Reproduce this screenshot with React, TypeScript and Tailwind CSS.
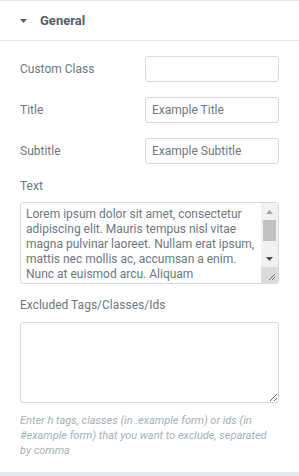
import React from "react";

const lorem =
  "Lorem ipsum dolor sit amet, consectetur adipiscing elit. Mauris tempus nisl vitae magna pulvinar laoreet. Nullam erat ipsum, mattis nec mollis ac, accumsan a enim. Nunc at euismod arcu. Aliquam ullamcorper eros justo, vel mollis neque facilisis vel. Proin augue ipsum, consequat a nunc et, faucibus tempor elit. Etiam a mauris sed metus posuere suscipit.";

function Row({ label, value }: { label: string; value: string }) {
  return (
    <div className="flex items-center justify-between h-[26px]">
      <span className="text-[12px] text-[#6d7882]">{label}</span>
      <input
        readOnly
        defaultValue={value}
        className="w-[134px] h-[26px] border border-[#d5dadf] rounded-[3px] px-[6px] text-[12px] text-[#6d7882] outline-none bg-white"
      />
    </div>
  );
}

function FakeScrollbar() {
  return (
    <div className="absolute right-px top-px bottom-px w-[17px] flex flex-col bg-[#f1f1f1]">
      <div className="h-[17px] flex items-center justify-center">
        <svg width="7" height="4" viewBox="0 0 7 4">
          <path d="M0 4 H7 L3.5 0 Z" fill="#a3a3a3" />
        </svg>
      </div>
      <div className="flex-1 flex flex-col px-[2px]">
        <div className="h-[21px] bg-[#c1c1c1]" />
      </div>
      <div className="h-[17px] flex items-center justify-center">
        <svg width="7" height="4" viewBox="0 0 7 4">
          <path d="M0 0 H7 L3.5 4 Z" fill="#505050" />
        </svg>
      </div>
      <div className="h-[16px] bg-[#dcdcdc] flex items-end justify-end rounded-br-[2px]">
        <svg width="10" height="10" viewBox="0 0 10 10" className="mb-[2px] mr-[2px]">
          <path d="M9 3 L3 9 M9 6 L6 9" stroke="#6b6b6b" strokeWidth="1" />
        </svg>
      </div>
    </div>
  );
}

export default function App() {
  return (
    <div
      className="w-[299px] h-[476px] bg-white flex flex-col overflow-hidden"
      style={{ fontFamily: "Roboto, 'Liberation Sans', sans-serif" }}
    >
      <div className="border-t border-[#e6e8ea] h-[41px] flex items-center px-5 border-b">
        <svg width="7" height="4" viewBox="0 0 7 4" className="mr-[13px]">
          <path d="M0 0 H7 L3.5 4 Z" fill="#556068" />
        </svg>
        <span className="text-[13px] font-bold text-[#556068]">General</span>
      </div>
      <div className="flex-1 px-5 pt-[15px] flex flex-col">
        <div className="flex flex-col gap-[15px]">
          <Row label="Custom Class" value="" />
          <Row label="Title" value="Example Title" />
          <Row label="Subtitle" value="Example Subtitle" />
        </div>
        <div className="mt-[15px] text-[12px] text-[#6d7882] leading-[14px]">Text</div>
        <div className="relative mt-[9px] h-[82px]">
          <textarea
            readOnly
            defaultValue={lorem}
            className="block w-full h-[82px] border border-[#d5dadf] rounded-[3px] pl-[5px] pr-[18px] pt-[4px] pb-[5px] text-[12px] leading-[15px] text-[#6d7882] outline-none resize-none overflow-hidden"
          />
          <FakeScrollbar />
        </div>
        <div className="mt-[14px] text-[12px] text-[#6d7882] leading-[14px]">Excluded Tags/Classes/Ids</div>
        <textarea
          readOnly
          className="block mt-[10px] w-full h-[81px] border border-[#d5dadf] rounded-[3px] px-[5px] py-[5px] text-[12px] leading-[15px] text-[#6d7882] outline-none resize-y"
        />
        <p className="mt-[10px] text-[11px] italic leading-[15px] text-[#a4afb7]">
          Enter h tags, classes (in .example form) or ids (in #example form) that you want to exclude, separated by comma
        </p>
      </div>
      <div className="h-[4px] bg-[#e6e8ea]" />
    </div>
  );
}
